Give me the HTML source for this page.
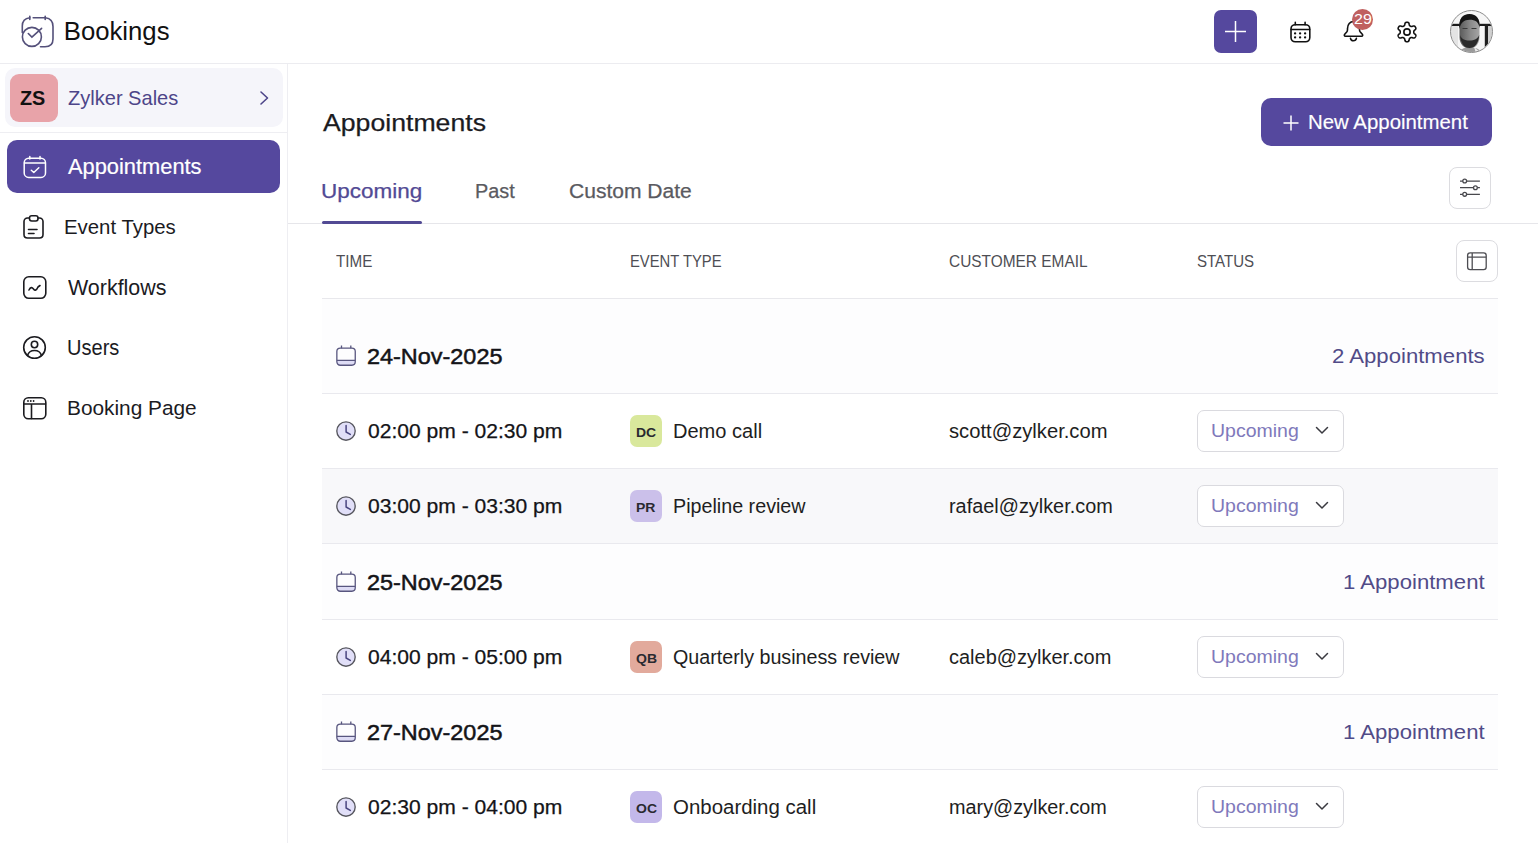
<!DOCTYPE html>
<html><head><meta charset="utf-8">
<style>
*{margin:0;padding:0;box-sizing:border-box}
html,body{width:1538px;height:843px;overflow:hidden;background:#fff;font-family:"Liberation Sans",sans-serif;color:#1b1b1f}
.a{position:absolute}
.t{position:absolute;white-space:nowrap;line-height:1}
svg{position:absolute;overflow:visible}
</style></head><body>
<div class="a" style="left:0px;top:63px;width:1538px;height:1px;background:#ececf0;"></div>
<svg style="left:21px;top:15px" width="33" height="33" viewBox="0 0 33 33" fill="none" stroke="#54507a" stroke-width="1.6" stroke-linecap="round">
  <path d="M8.8 2.8 C4 3.5 1.3 6 1.3 11 L1.3 17.5"/>
  <path d="M12.2 2.8 L24.5 2.8 C29.5 3.5 32 6.5 32 11.5 L32 24 C32 29 29 31.8 24 31.8 L19.5 31.8"/>
  <path d="M8.8 1.3 V4.4 M24.2 1.3 V4.4"/>
  <circle cx="10.9" cy="21.9" r="9.5"/>
  <path d="M7.3 18.5 L10.9 22.1 L20.6 13.3"/>
</svg>
<div class="t" style="left:63.74px;top:19.00px;font-size:25.73px;color:#111">Bookings</div>
<div class="a" style="left:1214px;top:10px;width:43px;height:43px;background:#55489e;border-radius:7px"></div>
<svg style="left:1214px;top:10px" width="43" height="43" stroke="#fff" stroke-width="1.5"><path d="M21.5 11 V32 M11 21.5 H32"/></svg>
<svg style="left:1289px;top:20.7px" width="23" height="23" viewBox="0 0 23 23" fill="none" stroke="#111" stroke-width="1.6" stroke-linecap="round">
  <rect x="2" y="3.7" width="18.8" height="17.1" rx="4.2"/>
  <path d="M2.2 8.5 H20.6 M6.3 1.4 V3.7 M16.1 1.4 V3.7"/>
  <g fill="#111" stroke="none"><circle cx="6.1" cy="12.4" r="1.15"/><circle cx="11.1" cy="12.4" r="1.15"/><circle cx="16.1" cy="12.4" r="1.15"/><circle cx="6.1" cy="16.4" r="1.15"/><circle cx="11.1" cy="16.4" r="1.15"/><circle cx="16.1" cy="16.4" r="1.15"/></g>
</svg>
<svg style="left:1343px;top:20px" width="22" height="23" viewBox="0 0 22 23" fill="none" stroke="#111" stroke-width="1.6" stroke-linejoin="round" stroke-linecap="round">
  <path d="M3 16.3 H18.5 C19.8 16.3 20 15 19.3 14.2 L17.3 12 C16.7 11.3 16.5 10.7 16.5 9.5 L16.5 8.5 C16.5 4.5 13.5 1.5 10.5 1.5 C7 1.5 4.5 4.5 4.5 8.5 L4.5 9.5 C4.5 10.7 4.3 11.3 3.7 12 L1.7 14.2 C1 15 1.2 16.3 2.5 16.3 Z"/>
  <path d="M7.5 18.4 C8 21.6 12.8 21.6 13.4 18.4"/>
</svg>
<div class="a" style="left:1352px;top:8.8px;width:21.2px;height:21.2px;background:#c0605f;border-radius:50%"></div>
<div class="t" style="left:1353.60px;top:12.00px;font-size:14.39px;color:#fff;transform:scaleX(1.1160);transform-origin:0 0">29</div>
<svg style="left:1395.05px;top:19.8px" width="24" height="24" viewBox="0 0 24 24" fill="none" stroke="#111" stroke-width="1.6" stroke-linejoin="round">
  <path d="M18.80 12.00 L18.80 12.24 L18.81 12.48 L18.82 12.72 L18.87 12.97 L19.00 13.23 L19.26 13.54 L19.70 13.92 L20.23 14.36 L20.63 14.80 L20.83 15.21 L20.86 15.58 L20.81 15.92 L20.70 16.24 L20.56 16.55 L20.40 16.85 L20.22 17.14 L20.02 17.41 L19.80 17.67 L19.53 17.89 L19.20 18.04 L18.75 18.07 L18.16 17.95 L17.52 17.71 L16.97 17.52 L16.57 17.44 L16.27 17.47 L16.03 17.55 L15.81 17.66 L15.61 17.77 L15.40 17.89 L15.19 18.01 L14.99 18.13 L14.79 18.27 L14.60 18.43 L14.43 18.68 L14.29 19.06 L14.19 19.63 L14.07 20.31 L13.89 20.88 L13.63 21.25 L13.33 21.47 L13.01 21.59 L12.68 21.65 L12.34 21.69 L12.00 21.70 L11.66 21.69 L11.32 21.65 L10.99 21.59 L10.67 21.47 L10.37 21.25 L10.11 20.88 L9.93 20.31 L9.81 19.63 L9.71 19.06 L9.57 18.68 L9.40 18.43 L9.21 18.27 L9.01 18.13 L8.81 18.01 L8.60 17.89 L8.39 17.77 L8.19 17.66 L7.97 17.55 L7.73 17.47 L7.43 17.44 L7.03 17.52 L6.48 17.71 L5.84 17.95 L5.25 18.07 L4.80 18.04 L4.47 17.89 L4.20 17.67 L3.98 17.41 L3.78 17.14 L3.60 16.85 L3.44 16.55 L3.30 16.24 L3.19 15.92 L3.14 15.58 L3.17 15.21 L3.37 14.80 L3.77 14.36 L4.30 13.92 L4.74 13.54 L5.00 13.23 L5.13 12.97 L5.18 12.72 L5.19 12.48 L5.20 12.24 L5.20 12.00 L5.20 11.76 L5.19 11.52 L5.18 11.28 L5.13 11.03 L5.00 10.77 L4.74 10.46 L4.30 10.08 L3.77 9.64 L3.37 9.20 L3.17 8.79 L3.14 8.42 L3.19 8.08 L3.30 7.76 L3.44 7.45 L3.60 7.15 L3.78 6.86 L3.98 6.59 L4.20 6.33 L4.47 6.11 L4.80 5.96 L5.25 5.93 L5.84 6.05 L6.48 6.29 L7.03 6.48 L7.43 6.56 L7.73 6.53 L7.97 6.45 L8.19 6.34 L8.39 6.23 L8.60 6.11 L8.81 5.99 L9.01 5.87 L9.21 5.73 L9.40 5.57 L9.57 5.32 L9.71 4.94 L9.81 4.37 L9.93 3.69 L10.11 3.12 L10.37 2.75 L10.67 2.53 L10.99 2.41 L11.32 2.35 L11.66 2.31 L12.00 2.30 L12.34 2.31 L12.68 2.35 L13.01 2.41 L13.33 2.53 L13.63 2.75 L13.89 3.12 L14.07 3.69 L14.19 4.37 L14.29 4.94 L14.43 5.32 L14.60 5.57 L14.79 5.73 L14.99 5.87 L15.19 5.99 L15.40 6.11 L15.61 6.23 L15.81 6.34 L16.03 6.45 L16.27 6.53 L16.57 6.56 L16.97 6.48 L17.52 6.29 L18.16 6.05 L18.75 5.93 L19.20 5.96 L19.53 6.11 L19.80 6.33 L20.02 6.59 L20.22 6.86 L20.40 7.15 L20.56 7.45 L20.70 7.76 L20.81 8.08 L20.86 8.42 L20.83 8.79 L20.63 9.20 L20.23 9.64 L19.70 10.08 L19.26 10.46 L19.00 10.77 L18.87 11.03 L18.82 11.28 L18.81 11.52 L18.80 11.76 Z"/>
  <circle cx="12" cy="12" r="3.15"/>
</svg>
<svg style="left:1450px;top:10px" width="43" height="43" viewBox="0 0 43 43">
  <defs><clipPath id="av"><circle cx="21.5" cy="21.5" r="20.5"/></clipPath>
  <linearGradient id="fg" x1="0" x2="1" y1="0" y2="0"><stop offset="0" stop-color="#5a5a5a"/><stop offset="0.55" stop-color="#8a8a8a"/><stop offset="1" stop-color="#a5a5a5"/></linearGradient></defs>
  <g clip-path="url(#av)">
    <rect x="0" y="0" width="43" height="43" fill="#f6f6f6"/>
    <rect x="0" y="16" width="8" height="27" fill="#e4e4e4"/>
    <rect x="36" y="16" width="7" height="27" fill="#d0d0d0"/>
    <rect x="0" y="13.8" width="43" height="2.2" fill="#1a1a1a"/>
    <rect x="34.8" y="14" width="3.2" height="26" fill="#1f1f1f"/>
    <path d="M9 43 C10 39 14 37.5 20 37.5 C26 37.5 30 39 32 43 Z" fill="#9a9a9a"/>
    <path d="M24 37 L31 43 L26 43 Z" fill="#eeeeee"/>
    <path d="M9.5 15 C9.5 8.5 13 4.5 19.5 4.5 C26 4.5 29.5 8.5 29.5 15 L29.5 27 C29.5 34 25 38.5 19.5 38.5 C14 38.5 9.5 34 9.5 27 Z" fill="url(#fg)"/>
    <path d="M9.3 19 C8.5 9 12.5 4 19.5 4 C26.5 4 30.3 9 29.7 18 C28.5 12 25.5 9.8 19.5 9.8 C14 9.8 10.8 12.5 9.3 19 Z" fill="#141414"/>
    <path d="M10 25 C10.5 33.5 14.5 38 19.5 38 C24.5 38 28.8 33.5 29.2 25 C27.5 29 24.5 30.5 19.5 30.5 C14.5 30.5 11.5 29 10 25 Z" fill="#2a2a2a"/>
    <path d="M12.5 18.5 H17.5 M21.5 18.5 H26.5" stroke="#3a3a3a" stroke-width="1.2"/>
  </g>
  <circle cx="21.5" cy="21.5" r="21" fill="none" stroke="#8a8a8a" stroke-width="1"/>
</svg>
<div class="a" style="left:287px;top:64px;width:1px;height:779px;background:#eeeef2;"></div>
<div class="a" style="left:5px;top:68px;width:278px;height:59px;background:#f5f5fa;border-radius:10px"></div>
<div class="a" style="left:10px;top:74px;width:48px;height:48px;background:#e8a3a9;border-radius:9px"></div>
<div class="t" style="left:20.40px;top:88.00px;font-size:20.64px;color:#111;font-weight:bold;transform:scaleX(0.9610);transform-origin:0 0">ZS</div>
<div class="t" style="left:68.20px;top:88.00px;font-size:20.64px;color:#4d4589;transform:scaleX(0.9717);transform-origin:0 0">Zylker Sales</div>
<svg style="left:258px;top:90px" width="14" height="16" fill="none" stroke="#4d4589" stroke-width="1.6" stroke-linecap="round" stroke-linejoin="round"><path d="M3 2 L9.5 8 L3 14"/></svg>
<div class="a" style="left:0px;top:132px;width:287px;height:1px;background:#eeeef2;"></div>
<div class="a" style="left:7px;top:140px;width:273px;height:53px;background:#55489e;border-radius:10px"></div>
<svg style="left:23px;top:155px" width="24" height="24" viewBox="0 0 24 24" fill="none" stroke="#fff" stroke-width="1.5" stroke-linecap="round" stroke-linejoin="round">
  <rect x="1.2" y="3.2" width="21.3" height="19.2" rx="4.5"/>
  <path d="M1.5 8 H22.3 M6.8 1.5 V4 M17 1.5 V4 M8.3 15.3 L10.8 17.5 L15.8 12.8"/>
</svg>
<div class="t" style="left:67.98px;top:156.00px;font-size:21.72px;color:#fff;-webkit-text-stroke:0.2px #fff;transform:scaleX(1.0054);transform-origin:0 0">Appointments</div>
<svg style="left:23px;top:215px" width="22" height="24" viewBox="0 0 22 24" fill="none" stroke="#1b1b1f" stroke-width="1.6" stroke-linecap="round" stroke-linejoin="round">
  <path d="M6 3 H4.5 C2.5 3 1 4.5 1 6.5 V19.5 C1 21.5 2.5 23 4.5 23 H16.5 C18.5 23 20 21.5 20 19.5 V6.5 C20 4.5 18.5 3 16.5 3 H15"/>
  <rect x="6.5" y="0.8" width="8.5" height="5.2" rx="2.2"/>
  <path d="M5.5 14.5 H14 M5.5 18.5 H11"/>
</svg>
<div class="t" style="left:64.07px;top:216.00px;font-size:21.08px;color:#1b1b1f;transform:scaleX(0.9666);transform-origin:0 0">Event Types</div>
<svg style="left:23px;top:276px" width="24" height="24" viewBox="0 0 24 24" fill="none" stroke="#1b1b1f" stroke-width="1.6" stroke-linecap="round" stroke-linejoin="round">
  <rect x="0.8" y="0.8" width="22" height="21.5" rx="5"/>
  <path d="M6 14 C7.5 11 9 11 10.5 13 C12 15 13.5 14.5 15 11 L17 9.5"/>
</svg>
<div class="t" style="left:67.69px;top:277.00px;font-size:21.80px;color:#1b1b1f;transform:scaleX(0.9838);transform-origin:0 0">Workflows</div>
<svg style="left:23px;top:336px" width="24" height="24" viewBox="0 0 24 24" fill="none" stroke="#1b1b1f" stroke-width="1.6" stroke-linecap="round" stroke-linejoin="round">
  <circle cx="11.5" cy="11.5" r="10.8"/>
  <circle cx="11.5" cy="8.5" r="3.2"/>
  <path d="M4.5 19.5 C5.5 16 8 14.5 11.5 14.5 C15 14.5 17.5 16 18.5 19.5"/>
</svg>
<div class="t" style="left:66.50px;top:337.00px;font-size:21.22px;color:#1b1b1f;transform:scaleX(0.9444);transform-origin:0 0">Users</div>
<svg style="left:23px;top:397px" width="24" height="24" viewBox="0 0 24 24" fill="none" stroke="#1b1b1f" stroke-width="1.6" stroke-linecap="round" stroke-linejoin="round">
  <rect x="0.8" y="0.8" width="22" height="21" rx="4.5"/>
  <path d="M1 7 H22.5 M8.5 7 V21.5"/>
  <g fill="#1b1b1f" stroke="none"><circle cx="5" cy="4" r="0.9"/><circle cx="7.8" cy="4" r="0.9"/><circle cx="10.6" cy="4" r="0.9"/></g>
</svg>
<div class="t" style="left:66.63px;top:397.00px;font-size:21.08px;color:#1b1b1f;transform:scaleX(0.9879);transform-origin:0 0">Booking Page</div>
<div class="t" style="left:322.62px;top:112.00px;font-size:23.11px;color:#1b1b1f;-webkit-text-stroke:0.25px #1b1b1f;transform:scaleX(1.1534);transform-origin:0 0">Appointments</div>
<div class="a" style="left:1261px;top:98px;width:231px;height:48px;background:#55489e;border-radius:10px"></div>
<svg style="left:1282.2px;top:113.6px" width="18" height="18" stroke="#fff" stroke-width="1.5"><path d="M9 1.5 V16.5 M1.5 9 H16.5"/></svg>
<div class="t" style="left:1308.03px;top:113.00px;font-size:19.88px;color:#fff;-webkit-text-stroke:0.15px #fff;transform:scaleX(1.0271);transform-origin:0 0">New Appointment</div>
<div class="t" style="left:321.32px;top:181.00px;font-size:20.35px;color:#524a94;-webkit-text-stroke:0.25px #524a94;transform:scaleX(1.1055);transform-origin:0 0">Upcoming</div>
<div class="t" style="left:475.31px;top:181.00px;font-size:20.35px;color:#5a5a60;-webkit-text-stroke:0.25px #5a5a60;transform:scaleX(0.9753);transform-origin:0 0">Past</div>
<div class="t" style="left:569.05px;top:181.00px;font-size:20.35px;color:#5a5a60;-webkit-text-stroke:0.25px #5a5a60;transform:scaleX(1.0342);transform-origin:0 0">Custom Date</div>
<div class="a" style="left:288px;top:223px;width:1250px;height:1px;background:#e6e6ea;"></div>
<div class="a" style="left:322px;top:221px;width:100px;height:3px;background:#524a94;border-radius:2px"></div>
<div class="a" style="left:1449px;top:167px;width:42px;height:42px;background:#fff;border:1px solid #dcdce0;border-radius:8px"></div>
<svg style="left:1450px;top:168px" width="40" height="40" fill="none" stroke="#48484d" stroke-width="1.3">
  <path d="M10 13.05 H12.8 M16.6 13.05 H29.9 M10 19.7 H23.5 M27.3 19.7 H29.9 M10 26.35 H12.8 M16.6 26.35 H29.9"/>
  <circle cx="14.7" cy="13.05" r="1.9"/><circle cx="25.4" cy="19.7" r="1.9"/><circle cx="14.7" cy="26.35" r="1.9"/>
</svg>
<div class="t" style="left:335.80px;top:253.00px;font-size:17.01px;color:#4e4e54;transform:scaleX(0.8953);transform-origin:0 0">TIME</div>
<div class="t" style="left:629.82px;top:253.00px;font-size:17.01px;color:#4e4e54;transform:scaleX(0.8707);transform-origin:0 0">EVENT TYPE</div>
<div class="t" style="left:949.23px;top:253.00px;font-size:17.01px;color:#4e4e54;transform:scaleX(0.9072);transform-origin:0 0">CUSTOMER EMAIL</div>
<div class="t" style="left:1197.32px;top:253.00px;font-size:17.01px;color:#4e4e54;transform:scaleX(0.8856);transform-origin:0 0">STATUS</div>
<div class="a" style="left:1456px;top:240px;width:42px;height:42px;background:#fff;border:1px solid #dcdce0;border-radius:8px"></div>
<svg style="left:1456px;top:241px" width="40" height="40" fill="none" stroke="#4d4d52" stroke-width="1.3">
  <rect x="11.6" y="11.9" width="18.6" height="16.8" rx="2.6"/><path d="M11.6 16.1 H30.2 M16.2 11.9 V28.7"/>
</svg>
<div class="a" style="left:322px;top:298px;width:1176px;height:1px;background:#e8e8ec;"></div>
<div class="a" style="left:322px;top:299px;width:1176px;height:94px;background:#fdfdfe;"></div>
<div class="a" style="left:322px;top:393px;width:1176px;height:1px;background:#e9e9ee;"></div>
<svg style="left:335px;top:345px" width="22" height="22" viewBox="0 0 22 22" fill="none" stroke="#58567f" stroke-width="1.3"><path d="M1.85 15.4 H20.25 V17 C20.25 18.9 18.9 20.25 17 20.25 H5.1 C3.2 20.25 1.85 18.9 1.85 17 Z" fill="#dedcf5" stroke="none"/><rect x="1.85" y="3.2" width="18.4" height="17.05" rx="3.4"/><path d="M1.85 15.4 H20.25 M6.5 0.6 V3.2 M15.8 0.6 V3.2"/></svg>
<div class="t" style="left:366.63px;top:345.00px;font-size:22.97px;color:#141418;-webkit-text-stroke:0.5px #141418;transform:scaleX(1.0201);transform-origin:0 0">24-Nov-2025</div>
<div class="t" style="left:1332.19px;top:346.00px;font-size:20.93px;color:#514b88;transform:scaleX(1.0587);transform-origin:0 0">2 Appointments</div>
<div class="a" style="left:322px;top:468px;width:1176px;height:1px;background:#e9e9ee;"></div>
<svg style="left:335px;top:420px" width="22" height="22" viewBox="0 0 22 22" fill="none" stroke-linecap="round" stroke-linejoin="round"><circle cx="11" cy="11" r="9.2" fill="#e1dff8" stroke="#56565e" stroke-width="1.35"/><path d="M11.1 5.4 V12 L15.3 14.4" stroke="#4a4680" stroke-width="1.5"/></svg>
<div class="t" style="left:367.67px;top:422.00px;font-size:19.48px;color:#141418;-webkit-text-stroke:0.25px #141418;transform:scaleX(1.0819);transform-origin:0 0">02:00 pm - 02:30 pm</div>
<div class="a" style="left:630px;top:415px;width:32px;height:32px;background:#d9e89c;border-radius:7px"></div>
<div class="t" style="left:636.14px;top:426.00px;font-size:13.66px;color:#2a2a30;font-weight:bold;transform:scaleX(1.0247);transform-origin:0 0">DC</div>
<div class="t" style="left:672.60px;top:421.00px;font-size:20.35px;color:#1e1e22;transform:scaleX(0.9851);transform-origin:0 0">Demo call</div>
<div class="t" style="left:949.39px;top:421.00px;font-size:20.35px;color:#1e1e22;transform:scaleX(0.9924);transform-origin:0 0">scott@zylker.com</div>
<div class="a" style="left:1197px;top:410px;width:147px;height:42px;background:#fff;border:1px solid #dadadf;border-radius:7px"></div>
<div class="t" style="left:1211.14px;top:422.00px;font-size:18.60px;color:#8079bb;transform:scaleX(1.0479);transform-origin:0 0">Upcoming</div>
<svg style="left:1315px;top:426px" width="14" height="9" fill="none" stroke="#3a3a40" stroke-width="1.5" stroke-linecap="round" stroke-linejoin="round"><path d="M1.5 1.5 L7 7 L12.5 1.5"/></svg>
<div class="a" style="left:322px;top:469px;width:1176px;height:74px;background:#f8f8fa;"></div>
<div class="a" style="left:322px;top:543px;width:1176px;height:1px;background:#e9e9ee;"></div>
<svg style="left:335px;top:495px" width="22" height="22" viewBox="0 0 22 22" fill="none" stroke-linecap="round" stroke-linejoin="round"><circle cx="11" cy="11" r="9.2" fill="#e1dff8" stroke="#56565e" stroke-width="1.35"/><path d="M11.1 5.4 V12 L15.3 14.4" stroke="#4a4680" stroke-width="1.5"/></svg>
<div class="t" style="left:367.67px;top:497.00px;font-size:19.48px;color:#141418;-webkit-text-stroke:0.25px #141418;transform:scaleX(1.0819);transform-origin:0 0">03:00 pm - 03:30 pm</div>
<div class="a" style="left:630px;top:490px;width:32px;height:32px;background:#cbc0ea;border-radius:7px"></div>
<div class="t" style="left:636.49px;top:501.00px;font-size:13.66px;color:#2a2a30;font-weight:bold;transform:scaleX(1.0247);transform-origin:0 0">PR</div>
<div class="t" style="left:672.62px;top:496.00px;font-size:20.35px;color:#1e1e22;transform:scaleX(0.9688);transform-origin:0 0">Pipeline review</div>
<div class="t" style="left:948.71px;top:496.00px;font-size:20.35px;color:#1e1e22;transform:scaleX(0.9768);transform-origin:0 0">rafael@zylker.com</div>
<div class="a" style="left:1197px;top:485px;width:147px;height:42px;background:#fff;border:1px solid #dadadf;border-radius:7px"></div>
<div class="t" style="left:1211.14px;top:497.00px;font-size:18.60px;color:#8079bb;transform:scaleX(1.0479);transform-origin:0 0">Upcoming</div>
<svg style="left:1315px;top:501px" width="14" height="9" fill="none" stroke="#3a3a40" stroke-width="1.5" stroke-linecap="round" stroke-linejoin="round"><path d="M1.5 1.5 L7 7 L12.5 1.5"/></svg>
<div class="a" style="left:322px;top:544px;width:1176px;height:75px;background:#fdfdfe;"></div>
<div class="a" style="left:322px;top:619px;width:1176px;height:1px;background:#e9e9ee;"></div>
<svg style="left:335px;top:571px" width="22" height="22" viewBox="0 0 22 22" fill="none" stroke="#58567f" stroke-width="1.3"><path d="M1.85 15.4 H20.25 V17 C20.25 18.9 18.9 20.25 17 20.25 H5.1 C3.2 20.25 1.85 18.9 1.85 17 Z" fill="#dedcf5" stroke="none"/><rect x="1.85" y="3.2" width="18.4" height="17.05" rx="3.4"/><path d="M1.85 15.4 H20.25 M6.5 0.6 V3.2 M15.8 0.6 V3.2"/></svg>
<div class="t" style="left:366.63px;top:571.00px;font-size:22.97px;color:#141418;-webkit-text-stroke:0.5px #141418;transform:scaleX(1.0201);transform-origin:0 0">25-Nov-2025</div>
<div class="t" style="left:1342.72px;top:572.00px;font-size:20.93px;color:#514b88;transform:scaleX(1.0587);transform-origin:0 0">1 Appointment</div>
<div class="a" style="left:322px;top:694px;width:1176px;height:1px;background:#e9e9ee;"></div>
<svg style="left:335px;top:646px" width="22" height="22" viewBox="0 0 22 22" fill="none" stroke-linecap="round" stroke-linejoin="round"><circle cx="11" cy="11" r="9.2" fill="#e1dff8" stroke="#56565e" stroke-width="1.35"/><path d="M11.1 5.4 V12 L15.3 14.4" stroke="#4a4680" stroke-width="1.5"/></svg>
<div class="t" style="left:367.67px;top:648.00px;font-size:19.48px;color:#141418;-webkit-text-stroke:0.25px #141418;transform:scaleX(1.0819);transform-origin:0 0">04:00 pm - 05:00 pm</div>
<div class="a" style="left:630px;top:641px;width:32px;height:32px;background:#e2aa9c;border-radius:7px"></div>
<div class="t" style="left:636.04px;top:652.00px;font-size:13.66px;color:#2a2a30;font-weight:bold;transform:scaleX(1.0247);transform-origin:0 0">QB</div>
<div class="t" style="left:673.31px;top:647.00px;font-size:20.35px;color:#1e1e22;transform:scaleX(0.9679);transform-origin:0 0">Quarterly business review</div>
<div class="t" style="left:949.20px;top:647.00px;font-size:20.35px;color:#1e1e22;transform:scaleX(0.9816);transform-origin:0 0">caleb@zylker.com</div>
<div class="a" style="left:1197px;top:636px;width:147px;height:42px;background:#fff;border:1px solid #dadadf;border-radius:7px"></div>
<div class="t" style="left:1211.14px;top:648.00px;font-size:18.60px;color:#8079bb;transform:scaleX(1.0479);transform-origin:0 0">Upcoming</div>
<svg style="left:1315px;top:652px" width="14" height="9" fill="none" stroke="#3a3a40" stroke-width="1.5" stroke-linecap="round" stroke-linejoin="round"><path d="M1.5 1.5 L7 7 L12.5 1.5"/></svg>
<div class="a" style="left:322px;top:695px;width:1176px;height:74px;background:#fdfdfe;"></div>
<div class="a" style="left:322px;top:769px;width:1176px;height:1px;background:#e9e9ee;"></div>
<svg style="left:335px;top:721px" width="22" height="22" viewBox="0 0 22 22" fill="none" stroke="#58567f" stroke-width="1.3"><path d="M1.85 15.4 H20.25 V17 C20.25 18.9 18.9 20.25 17 20.25 H5.1 C3.2 20.25 1.85 18.9 1.85 17 Z" fill="#dedcf5" stroke="none"/><rect x="1.85" y="3.2" width="18.4" height="17.05" rx="3.4"/><path d="M1.85 15.4 H20.25 M6.5 0.6 V3.2 M15.8 0.6 V3.2"/></svg>
<div class="t" style="left:366.63px;top:721.00px;font-size:22.97px;color:#141418;-webkit-text-stroke:0.5px #141418;transform:scaleX(1.0201);transform-origin:0 0">27-Nov-2025</div>
<div class="t" style="left:1342.72px;top:722.00px;font-size:20.93px;color:#514b88;transform:scaleX(1.0587);transform-origin:0 0">1 Appointment</div>
<div class="a" style="left:322px;top:844px;width:1176px;height:1px;background:#e9e9ee;"></div>
<svg style="left:335px;top:796px" width="22" height="22" viewBox="0 0 22 22" fill="none" stroke-linecap="round" stroke-linejoin="round"><circle cx="11" cy="11" r="9.2" fill="#e1dff8" stroke="#56565e" stroke-width="1.35"/><path d="M11.1 5.4 V12 L15.3 14.4" stroke="#4a4680" stroke-width="1.5"/></svg>
<div class="t" style="left:367.67px;top:798.00px;font-size:19.48px;color:#141418;-webkit-text-stroke:0.25px #141418;transform:scaleX(1.0819);transform-origin:0 0">02:30 pm - 04:00 pm</div>
<div class="a" style="left:630px;top:791px;width:32px;height:32px;background:#c3b8ea;border-radius:7px"></div>
<div class="t" style="left:635.89px;top:802.00px;font-size:13.66px;color:#2a2a30;font-weight:bold;transform:scaleX(1.0247);transform-origin:0 0">OC</div>
<div class="t" style="left:673.28px;top:797.00px;font-size:20.35px;color:#1e1e22;transform:scaleX(1.0050);transform-origin:0 0">Onboarding call</div>
<div class="t" style="left:948.71px;top:797.00px;font-size:20.35px;color:#1e1e22;transform:scaleX(0.9747);transform-origin:0 0">mary@zylker.com</div>
<div class="a" style="left:1197px;top:786px;width:147px;height:42px;background:#fff;border:1px solid #dadadf;border-radius:7px"></div>
<div class="t" style="left:1211.14px;top:798.00px;font-size:18.60px;color:#8079bb;transform:scaleX(1.0479);transform-origin:0 0">Upcoming</div>
<svg style="left:1315px;top:802px" width="14" height="9" fill="none" stroke="#3a3a40" stroke-width="1.5" stroke-linecap="round" stroke-linejoin="round"><path d="M1.5 1.5 L7 7 L12.5 1.5"/></svg>
</body></html>
